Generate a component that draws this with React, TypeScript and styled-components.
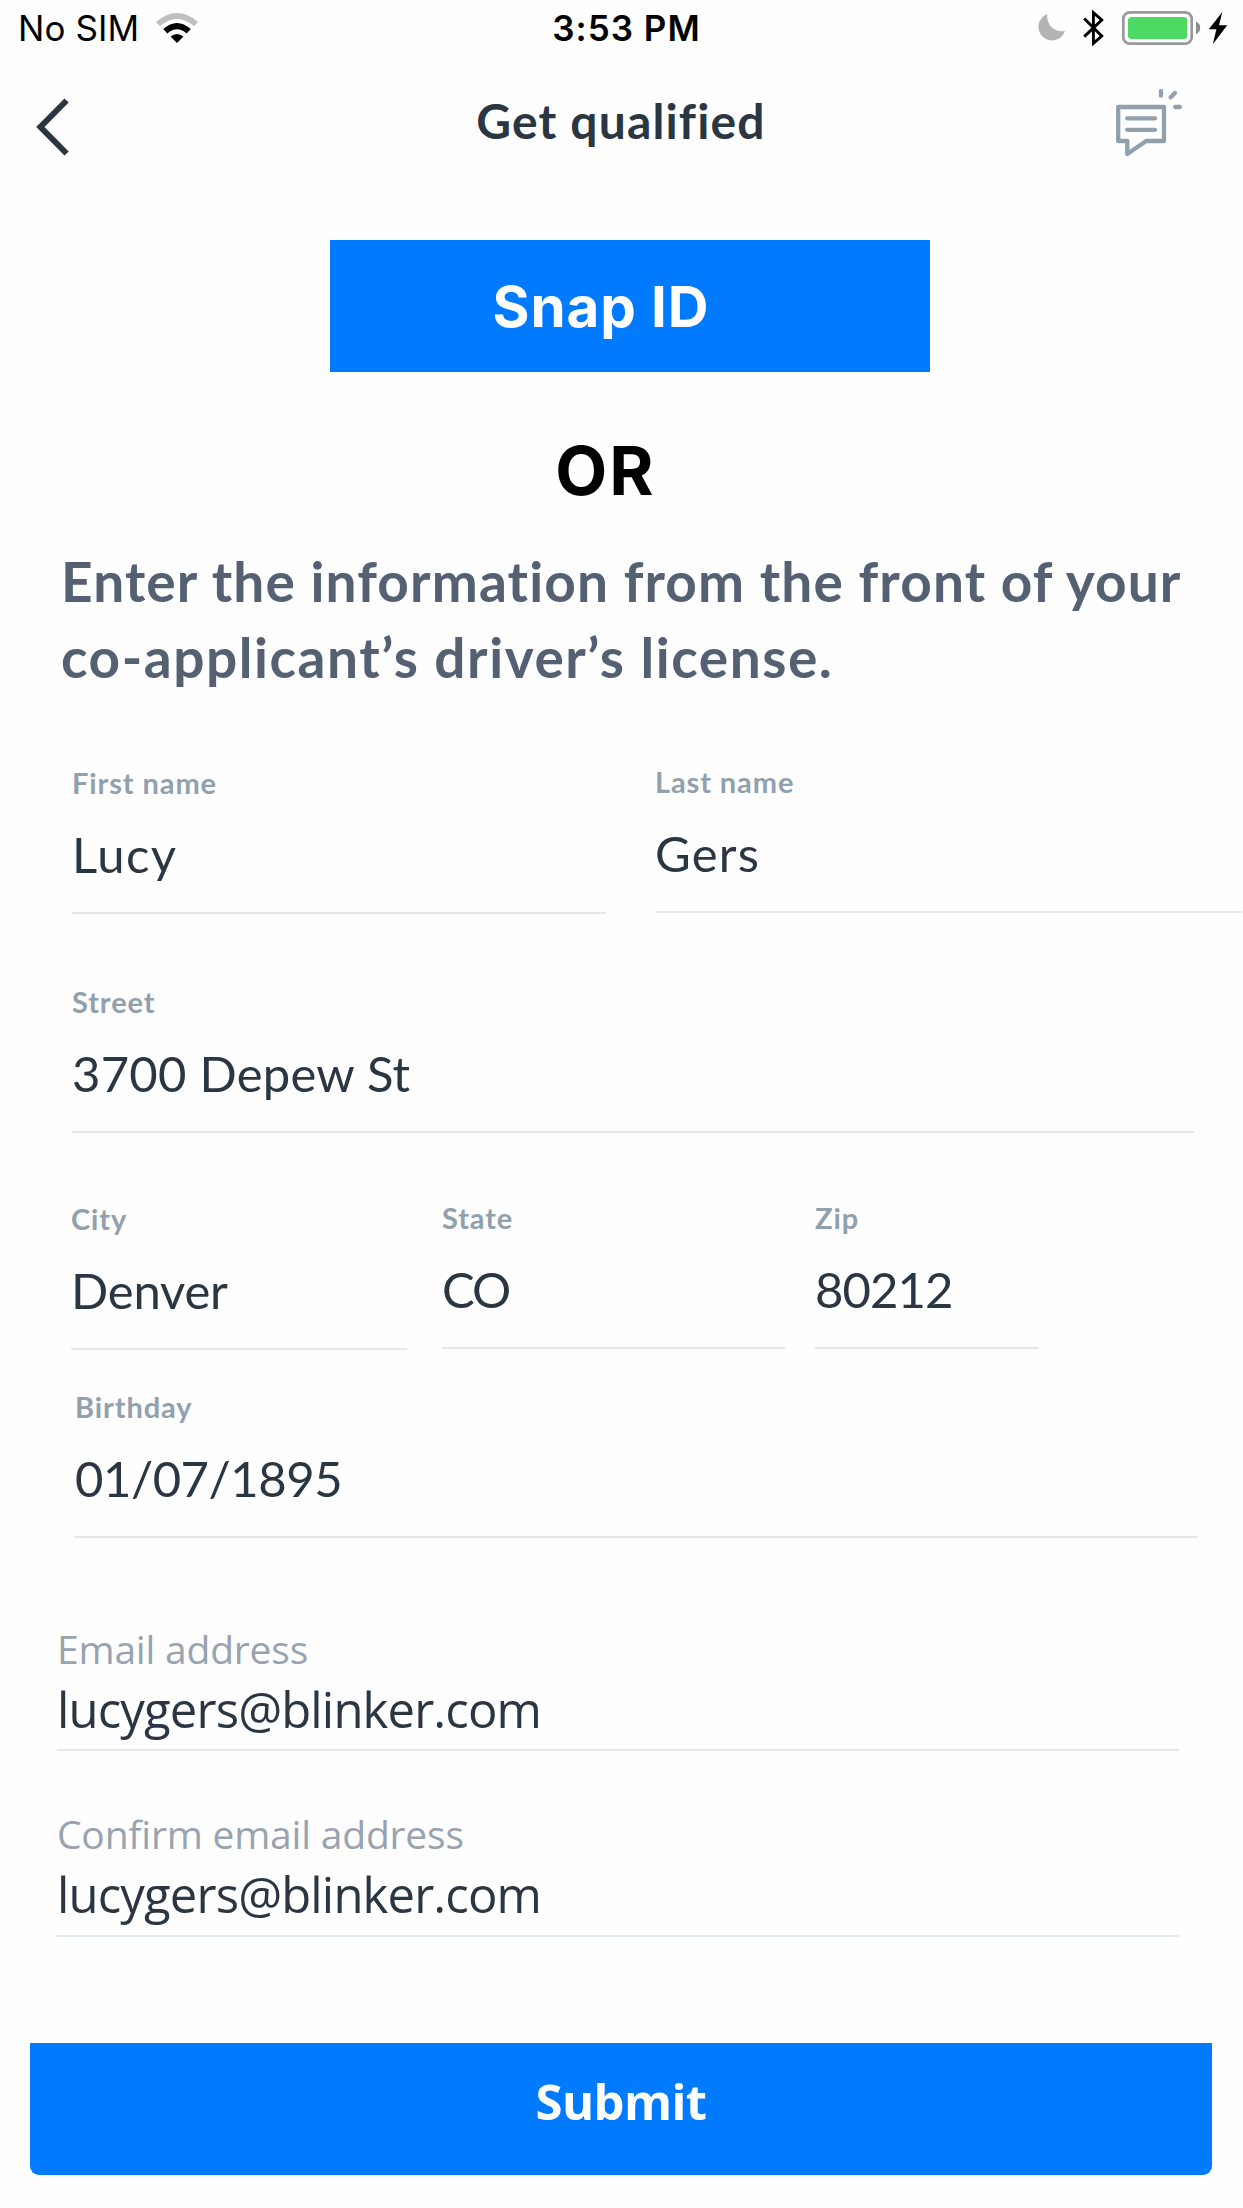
import React from 'react';
import styled, { createGlobalStyle } from 'styled-components';

const GlobalStyle = createGlobalStyle`
  * { box-sizing: border-box; }
  body { margin: 0; background: #fefefe; }
`;

const ink = '#2b3643';
const slate = '#556172';
const muted = '#91a0ad';
const blue = '#007aff';

const Screen = styled.main`
  display: flex;
  flex-direction: column;
  width: 1243px;
  height: 2208px;
  overflow: hidden;
  background: #fefefe;
  font-family: Lato, 'Open Sans', sans-serif;
  color: ${ink};
`;

const StatusBar = styled.div`
  display: grid;
  grid-template-columns: 1fr auto 1fr;
  align-items: center;
  height: 56px;
  padding: 0 15px 0 18px;
  font-family: Inter, sans-serif;
  font-size: 35px;
  line-height: 56px;
  color: #000;
`;

const Carrier = styled.div`
  display: flex;
  align-items: center;
  gap: 17px;
  letter-spacing: 0.1px;
`;

const Clock = styled.time`
  font-weight: 600;
  letter-spacing: 1px;
  padding-left: 7px;
`;

const Indicators = styled.div`
  display: flex;
  justify-content: flex-end;
`;

const NavBar = styled.header`
  display: grid;
  grid-template-columns: 1fr auto 1fr;
  align-items: center;
  height: 141px;
  padding: 0 60px 0 32px;
`;

const NavButton = styled.button<{ $end?: boolean }>`
  display: flex;
  justify-self: ${(p) => (p.$end ? 'end' : 'start')};
  padding: ${(p) => (p.$end ? '0 0 8px' : '0')};
  border: 0;
  background: none;
`;

const Title = styled.h1`
  margin: 0 0 12px 27px;
  font-size: 48px;
  line-height: 60px;
  font-weight: 700;
  letter-spacing: 1.15px;
`;

const SnapButton = styled.button`
  width: 600px;
  height: 132px;
  margin: 43px 0 0 330px;
  padding: 2px 58px 0 0;
  border: 0;
  background: ${blue};
  color: #fff;
  font: 700 56.5px/130px Inter, 'Liberation Sans', sans-serif;
  letter-spacing: 0.9px;
`;

const Divider = styled.div`
  margin-top: 59px;
  padding-right: 32px;
  text-align: center;
  color: #000;
  font: 700 67.5px/80px Inter, 'Liberation Sans', sans-serif;
  letter-spacing: 2px;
`;

const Prompt = styled.h2`
  display: flex;
  flex-direction: column;
  margin: 32px 0 0 61px;
  font-size: 55px;
  line-height: 76px;
  font-weight: 700;
  white-space: nowrap;
  color: ${slate};
`;

const PromptLine = styled.span<{ $track: number }>`
  letter-spacing: ${(p) => p.$track}px;
`;

const Form = styled.form`
  display: flex;
  flex-direction: column;
`;

const Row = styled.div<{ $top: number; $left: number }>`
  display: flex;
  align-items: flex-start;
  margin: ${(p) => p.$top}px 0 0 ${(p) => p.$left}px;
`;

const Field = styled.div<{ $width: number; $gap?: number; $drop?: number }>`
  flex: none;
  width: ${(p) => p.$width}px;
  height: 151px;
  margin: ${(p) => p.$drop ?? 0}px 0 0 ${(p) => p.$gap ?? 0}px;
  border-bottom: 2px solid #e6e7eb;
`;

const Label = styled.div`
  font-size: 29px;
  line-height: 40px;
  font-weight: 700;
  letter-spacing: 0.9px;
  color: ${muted};
`;

const Value = styled.div<{ $track?: number }>`
  margin-top: 21px;
  font-size: 49px;
  line-height: 60px;
  white-space: nowrap;
  letter-spacing: ${(p) => p.$track ?? 0}px;
`;

const EmailField = styled.div<{ $top: number; $height: number }>`
  width: 1122px;
  height: ${(p) => p.$height}px;
  margin: ${(p) => p.$top}px 0 0 57px;
  border-bottom: 2px solid #e3e8ec;
  font-family: 'Open Sans', sans-serif;
`;

const EmailLabel = styled.div`
  font-size: 39px;
  line-height: 44px;
  letter-spacing: -0.2px;
  color: #98a3af;
`;

const EmailValue = styled.div`
  margin-top: 8px;
  font-size: 49px;
  line-height: 60px;
  letter-spacing: -0.85px;
`;

const Submit = styled.button`
  width: 1182px;
  height: 132px;
  margin: 106px 0 0 30px;
  padding: 0 0 16px;
  border: 0;
  border-radius: 0 0 9px 9px;
  background: ${blue};
  color: #fff;
  font: 700 49px/116px 'Open Sans', sans-serif;
  letter-spacing: -0.6px;
`;

const WifiIcon = () => (
  <svg width="42" height="30" viewBox="156 12 42 30">
    <path d="M156 21 Q177 3 198 21 L194 25 Q177 11 160 25Z" fill="#bfbfbf" />
    <path d="M163.2 28 Q177 16 190.8 28 L186.6 32.4 Q177 24 167.4 32.4Z" />
    <path d="M170.5 35.5 Q177 30.5 183.5 35.5 L177 42Z" />
  </svg>
);

const StatusIcons = () => (
  <svg width="190" height="36" viewBox="1038 9 190 36">
    <path d="M1047.5 13 A13.6 13.6 0 1 0 1065 30 A14.6 14.6 0 0 1 1047.5 13Z" fill="#b3b3b3" />
    <path
      d="M1084.2 17.4 L1101.7 35 L1093.4 42.4 V11.6 L1101.7 19 L1084.2 35.6"
      fill="none"
      stroke="#000"
      strokeWidth="2.9"
    />
    <rect x="1123.3" y="11.3" width="68.4" height="31.4" rx="6.5" fill="none" stroke="#999" strokeWidth="2.7" />
    <rect x="1128" y="16" width="59.3" height="22" rx="3.5" fill="#4cd964" />
    <path d="M1196 20.5 Q1200.2 22.5 1200.2 26.8 Q1200.2 31.2 1196 33.2Z" fill="#8c8c8c" />
    <path d="M1222.3 11 L1208.8 28.3 H1216.4 L1212.8 43.3 L1227.2 24.3 H1219Z" />
  </svg>
);

const BackIcon = () => (
  <svg width="38" height="58" viewBox="32 97.5 38 58" fill="none" stroke={ink} strokeWidth="6">
    <path d="M66.6 100 L40.4 126.5 L66.6 153" />
  </svg>
);

const ChatIcon = () => (
  <svg
    width="67"
    height="69"
    viewBox="1116 88 67 69"
    fill="none"
    stroke="#91a0ad"
    strokeWidth="4.3"
    strokeLinecap="round"
    strokeLinejoin="round"
  >
    <path d="M1118.2 107 H1164 V141 H1146.2 L1127.3 154 V141 H1118.2Z" />
    <path d="M1127.2 118.3 H1155 M1127.2 129.8 H1155 M1161 91 V95.7 M1170.7 97.3 L1175 93 M1175.2 107 H1179.8" />
  </svg>
);

export default function App() {
  return (
    <Screen>
      <GlobalStyle />
      <StatusBar>
        <Carrier>
          No SIM <WifiIcon />
        </Carrier>
        <Clock>3:53 PM</Clock>
        <Indicators>
          <StatusIcons />
        </Indicators>
      </StatusBar>
      <NavBar>
        <NavButton aria-label="Back">
          <BackIcon />
        </NavButton>
        <Title>Get qualified</Title>
        <NavButton aria-label="Messages" $end>
          <ChatIcon />
        </NavButton>
      </NavBar>
      <SnapButton>Snap ID</SnapButton>
      <Divider>OR</Divider>
      <Prompt>
        <PromptLine $track={1.13}>Enter the information from the front of your</PromptLine>
        <PromptLine $track={1.55}>co-applicant’s driver’s license.</PromptLine>
      </Prompt>
      <Form>
        <Row $top={67} $left={72}>
          <Field $width={534} $drop={1}>
            <Label>First name</Label>
            <Value $track={1.4}>Lucy</Value>
          </Field>
          <Field $width={587} $gap={49}>
            <Label>Last name</Label>
            <Value $track={1.2}>Gers</Value>
          </Field>
        </Row>
        <Row $top={68} $left={72}>
          <Field $width={1122}>
            <Label>Street</Label>
            <Value $track={0.25}>3700 Depew St</Value>
          </Field>
        </Row>
        <Row $top={65} $left={71}>
          <Field $width={336} $drop={1}>
            <Label>City</Label>
            <Value $track={-0.2}>Denver</Value>
          </Field>
          <Field $width={343} $gap={35}>
            <Label>State</Label>
            <Value $track={-2}>CO</Value>
          </Field>
          <Field $width={224} $gap={30}>
            <Label>Zip</Label>
            <Value $track={-0.9}>80212</Value>
          </Field>
        </Row>
        <Row $top={37} $left={75}>
          <Field $width={1122}>
            <Label>Birthday</Label>
            <Value $track={-0.45}>01/07/1895</Value>
          </Field>
        </Row>
        <EmailField $top={89} $height={124}>
          <EmailLabel>Email address</EmailLabel>
          <EmailValue>lucygers@blinker.com</EmailValue>
        </EmailField>
        <EmailField $top={61} $height={125}>
          <EmailLabel>Confirm email address</EmailLabel>
          <EmailValue>lucygers@blinker.com</EmailValue>
        </EmailField>
        <Submit type="button">Submit</Submit>
      </Form>
    </Screen>
  );
}
